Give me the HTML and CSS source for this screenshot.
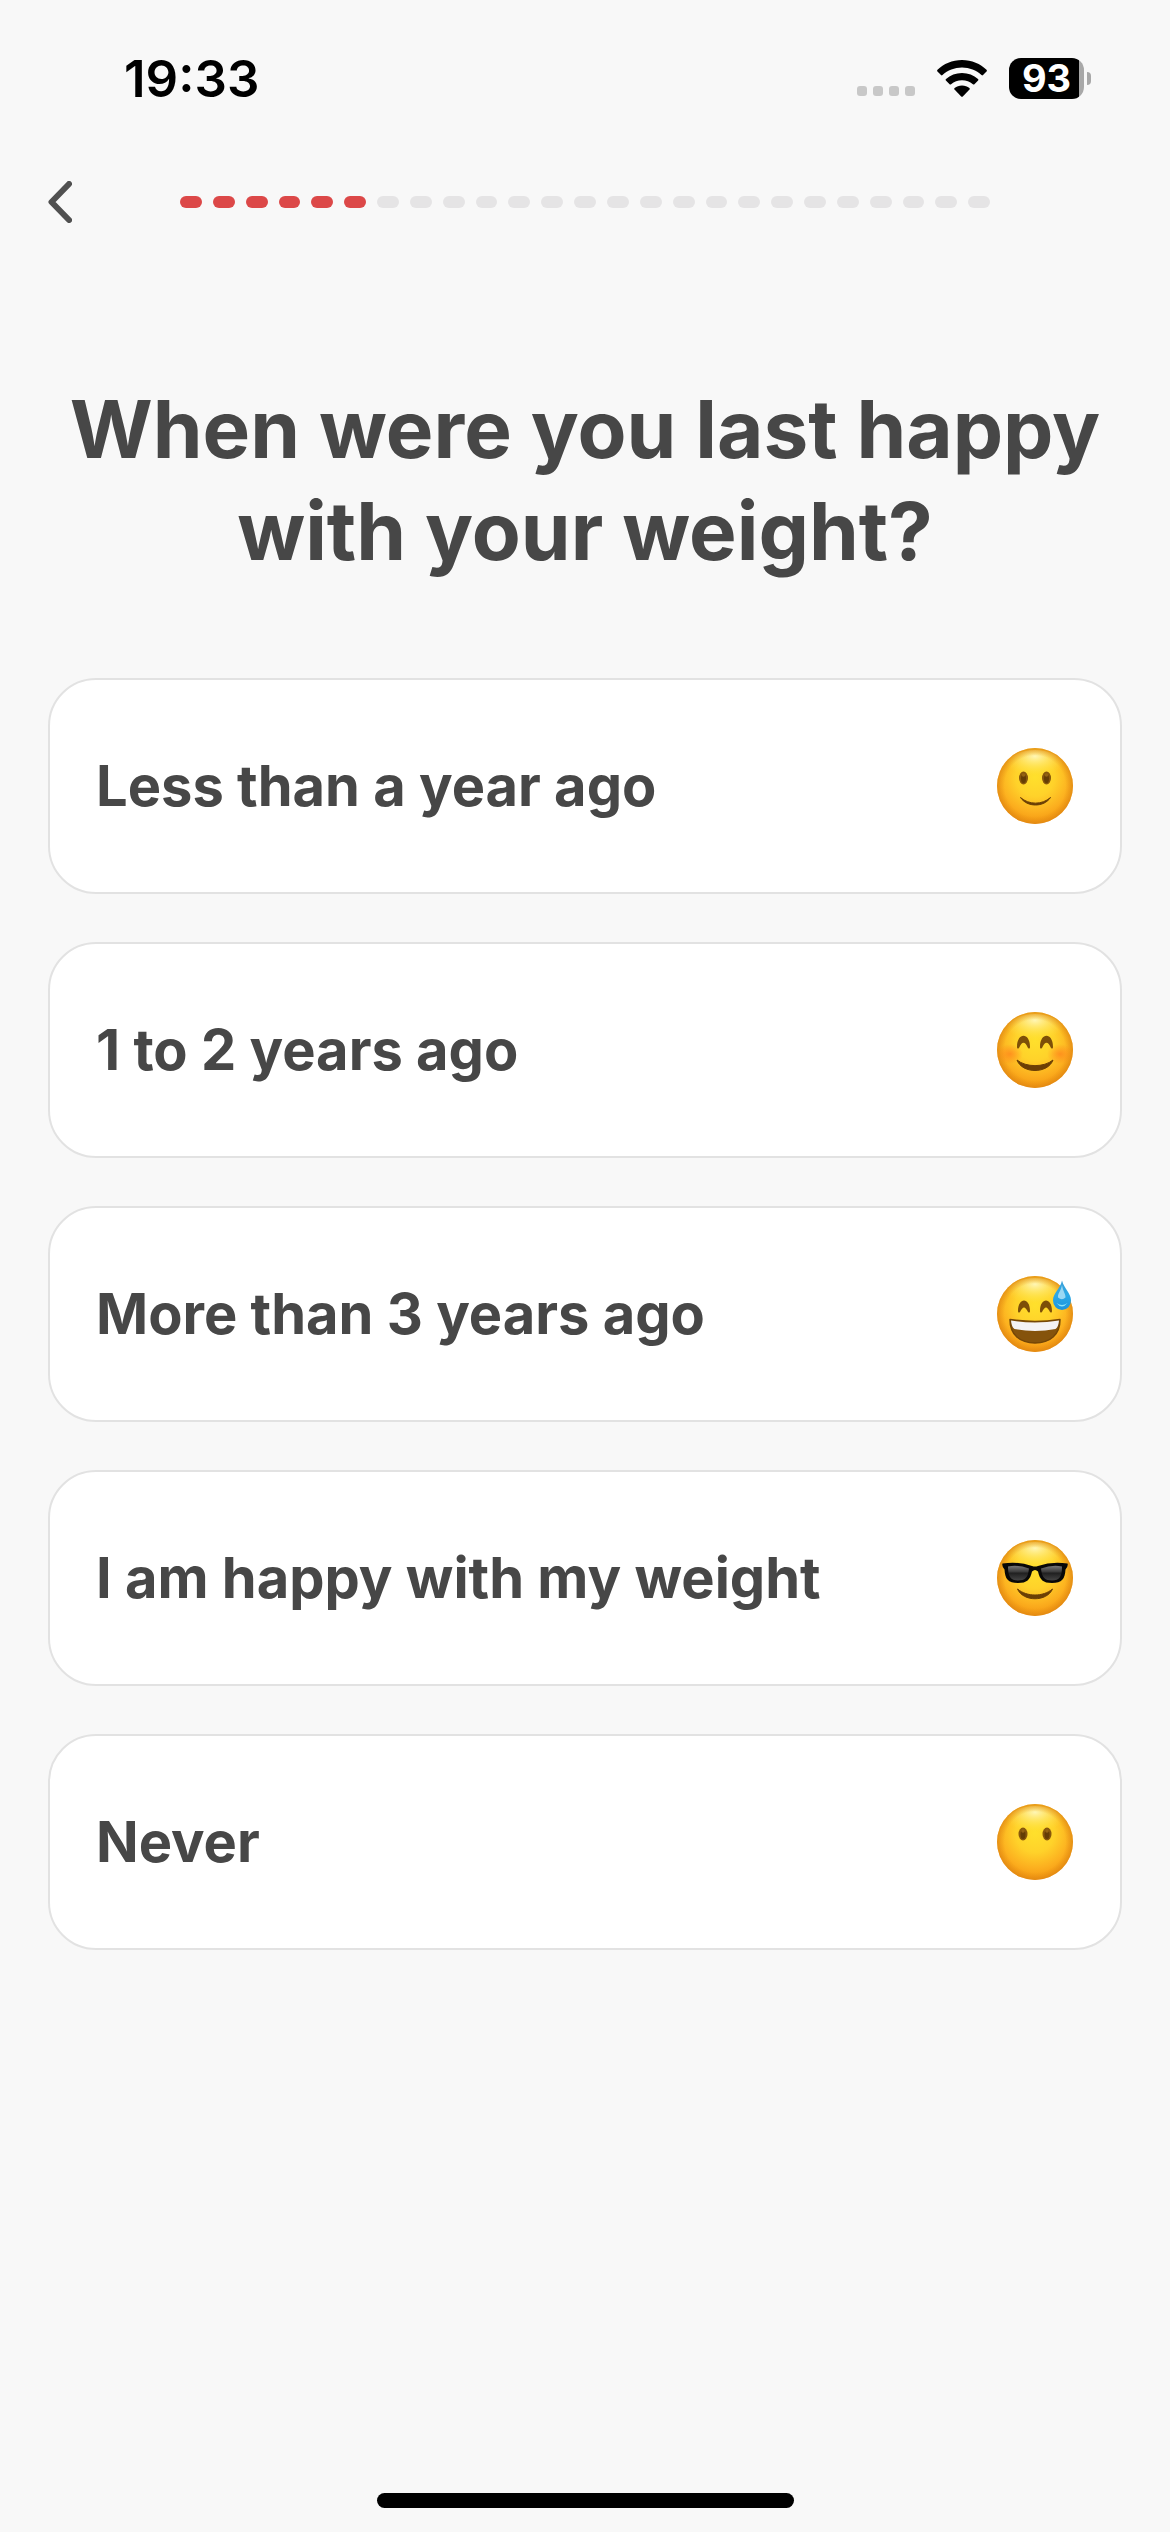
FILE: index.html
```html
<!DOCTYPE html>
<html lang="en">
<head>
  <meta charset="UTF-8" />
  <meta name="viewport" content="width=device-width, initial-scale=1.0"/>
  <title>When were you last happy with your weight?</title>
  <link rel="stylesheet" href="styles.css">
</head>
<body>
  <!-- shared face and gradients for the emoji -->
  <svg class="defs" width="0" height="0" aria-hidden="true">
    <defs>
      <radialGradient id="skin" cx="50%" cy="38%" r="64%">
        <stop offset="0" stop-color="#ffe02c"/>
        <stop offset="0.4" stop-color="#ffd22a"/>
        <stop offset="0.72" stop-color="#fcb01f"/>
        <stop offset="1" stop-color="#f3920f"/>
      </radialGradient>
      <radialGradient id="rim" cx="50%" cy="50%" r="50%">
        <stop offset="0.8" stop-color="#e08a10" stop-opacity="0"/>
        <stop offset="1" stop-color="#d98212" stop-opacity="0.65"/>
      </radialGradient>
      <radialGradient id="shine" cx="50%" cy="20%" r="60%">
        <stop offset="0" stop-color="#fffac4" stop-opacity="0.9"/>
        <stop offset="1" stop-color="#ffe94a" stop-opacity="0"/>
      </radialGradient>
      <radialGradient id="blush">
        <stop offset="0" stop-color="#ff7a1a" stop-opacity="0.65"/>
        <stop offset="1" stop-color="#ff7a1a" stop-opacity="0"/>
      </radialGradient>
      <linearGradient id="drop" x1="0" y1="0" x2="0" y2="1">
        <stop offset="0" stop-color="#3a9fd8"/>
        <stop offset="0.5" stop-color="#2ba9e6"/>
        <stop offset="1" stop-color="#1c93dc"/>
      </linearGradient>
      <linearGradient id="lens" x1="0" y1="0" x2="0" y2="1">
        <stop offset="0" stop-color="#777"/>
        <stop offset="0.4" stop-color="#3c3c3c"/>
        <stop offset="0.5" stop-color="#202020"/>
        <stop offset="1" stop-color="#444"/>
      </linearGradient>
      <symbol id="face" viewBox="0 0 78 78">
        <circle cx="39" cy="39" r="38" fill="url(#skin)"/>
        <ellipse cx="39" cy="19" rx="28" ry="16" fill="url(#shine)"/>
        <circle cx="39" cy="39" r="38" fill="url(#rim)"/>
      </symbol>
      <symbol id="eye" viewBox="0 0 10 14">
        <ellipse cx="5" cy="7" rx="4.5" ry="6.5" fill="#87570c"/>
        <ellipse cx="5" cy="7.5" rx="2.5" ry="4.5" fill="#643d05"/>
        <ellipse cx="5" cy="4" rx="1.8" ry="1.8" fill="#946313"/>
      </symbol>
    </defs>
  </svg>

  <div class="screen">
    <header class="status-bar">
      <div class="time">19:33</div>
      <div class="status-icons">
        <div class="signal"><i></i><i></i><i></i><i></i></div>
        <svg class="wifi" viewBox="0 0 50 37" aria-hidden="true">
          <path d="M25 0C34.700 0 43.500 3.800 49.500 9.800Q50.300 10.700 49.500 11.500L46 15.100Q45.300 15.800 44.500 15.100C39.300 10.400 32.500 7.600 25 7.600S10.700 10.400 5.500 15.100Q4.700 15.800 4 15.100L.5 11.500Q-.3 10.700 .5 9.800C6.500 3.800 15.300 0 25 0Z"/>
          <path d="M25 13C31.200 13 36.700 15.200 41 18.900Q41.900 19.700 41.100 20.500L37.400 24.200Q36.700 24.900 35.900 24.200C32.900 21.700 29.200 20.300 25 20.300S17.100 21.700 14.100 24.200Q13.300 24.900 12.600 24.200L8.900 20.500Q8.100 19.700 9 18.900C13.300 15.200 18.800 13 25 13Z"/>
          <path d="M25 25.500C27.900 25.500 30.400 26.500 32.400 28.100Q33.200 28.800 32.500 29.600L25.800 36.400Q25 37.200 24.200 36.400L17.500 29.600Q16.800 28.800 17.600 28.100C19.600 26.500 22.100 25.500 25 25.500Z"/>
        </svg>
        <div class="battery">
          <span class="level">93</span>
        </div>
      </div>
    </header>

    <nav class="top-nav">
      <button class="back" aria-label="Back">
        <svg viewBox="0 0 24 42" aria-hidden="true">
          <path d="M21 3L3.500 21L21 39"/>
        </svg>
      </button>
      <div class="progress" id="progress"></div>
    </nav>

    <main>
      <h1>When were you last happy with your weight?</h1>

      <div class="options">
        <button class="option">
          <span>Less than a year ago</span>
          <svg class="emoji" viewBox="0 0 78 78" aria-hidden="true">
            <use href="#face" width="78" height="78"/>
            <use href="#eye" x="22.500" y="24" width="10" height="14"/>
            <use href="#eye" x="45.500" y="24" width="10" height="14"/>
            <path d="M24.500 50.500C33 58 46 58 54.500 50.500C48 60.500 31 60.500 24.500 50.500Z" fill="#6b3f05" stroke="#6b3f05" stroke-linejoin="round"/>
          </svg>
        </button>

        <button class="option">
          <span>1 to 2 years ago</span>
          <svg class="emoji" viewBox="0 0 78 78" aria-hidden="true">
            <use href="#face" width="78" height="78"/>
            <ellipse cx="14" cy="43" rx="13" ry="10" fill="url(#blush)"/>
            <ellipse cx="64" cy="43" rx="13" ry="10" fill="url(#blush)"/>
            <path d="M21 36C21 21 34 21 34 36Q34 38.500 32 37C29 30 26 30 23 37Q21 38.500 21 36Z" fill="#7d4f08"/>
            <path d="M44 36C44 21 57 21 57 36Q57 38.500 55 37C52 30 49 30 46 37Q44 38.500 44 36Z" fill="#7d4f08"/>
            <path d="M21 49C30 56.500 48 56.500 57 49C52 63 26 63 21 49Z" fill="#6b3f05" stroke="#6b3f05" stroke-linejoin="round"/>
          </svg>
        </button>

        <button class="option">
          <span>More than 3 years ago</span>
          <svg class="emoji" viewBox="0 0 78 78" aria-hidden="true">
            <use href="#face" width="78" height="78"/>
            <path d="M22 36C22 22 34 22 34 36Q34 38.500 32 37C29 31 27 31 24 37Q22 38.500 22 36Z" fill="#7d4f08"/>
            <path d="M44 36C44 22 56 22 56 36Q56 38.500 54 37C51 31 49 31 46 37Q44 38.500 44 36Z" fill="#7d4f08"/>
            <path d="M14 44.500Q39 48.500 64 44.500C64 60 54 68 39 68S14 60 14 44.500Z" fill="#85530c" stroke="#744607" stroke-width="1.500" stroke-linejoin="round"/>
            <path d="M15 45.500Q39 49.500 63 45.500Q62.500 52 59.500 54Q39 58 18.500 54Q15.500 52 15 45.500Z" fill="#f4f2f4"/>
            <path d="M66 5.500C68.500 14.500 75 18 75 25.500A9 9.500 0 0 1 57 25.500C57 18 64 14.500 66 5.500Z" fill="url(#drop)"/>
            <path d="M66 10C67 17 69.500 18 69.500 22.500Q66 26 62 22.500C61.500 18.500 65 16 66 10Z" fill="#c9edfa" opacity="0.7"/>
            <path d="M60.500 28Q66 35 71.500 28Q66 32 60.500 28Z" fill="#8ae4fb"/>
          </svg>
        </button>

        <button class="option">
          <span>I am happy with my weight</span>
          <svg class="emoji" viewBox="0 0 78 78" aria-hidden="true">
            <use href="#face" width="78" height="78"/>
            <path d="M6.500 24.500Q22 22 36 27Q39 28 42 27Q56 22 71.500 24.500Q72.500 26.500 69.500 30.500C69 40 66 44 56 44C47 44 44 41 42 32.500Q39 29.500 36 32.500C34 41 31 44 22 44C12 44 9 40 8.500 30.500Q5.500 26.500 6.500 24.500Z" fill="#080808"/>
            <path d="M12 27.500Q22 25.500 33 29.500C32 39 29 41.500 22 41.500C14.500 41.500 12 37.500 12 27.500Z" fill="url(#lens)"/>
            <path d="M66 27.500Q56 25.500 45 29.500C46 39 49 41.500 56 41.500C63.500 41.500 66 37.500 66 27.500Z" fill="url(#lens)"/>
            <path d="M21.500 50C31 58 47 58 56.500 50C51 63 27 63 21.500 50Z" fill="#6b3f05" stroke="#6b3f05" stroke-linejoin="round"/>
          </svg>
        </button>

        <button class="option">
          <span>Never</span>
          <svg class="emoji" viewBox="0 0 78 78" aria-hidden="true">
            <use href="#face" width="78" height="78"/>
            <use href="#eye" x="22" y="24" width="10" height="14"/>
            <use href="#eye" x="46" y="24" width="10" height="14"/>
          </svg>
        </button>
      </div>
    </main>

    <div class="home-indicator"></div>
  </div>

  <script>
    const totalSteps = 25;
    const currentStep = 6;

    const progress = document.getElementById("progress");

    for (let i = 0; i < totalSteps; i++) {
      const step = document.createElement("span");
      step.className = i < currentStep ? "step done" : "step";
      progress.appendChild(step);
    }
  </script>
</body>
</html>
```
FILE: styles.css
```css
:root {
  --bg: #f8f8f8;
  --card: #ffffff;
  --border: #e2e2e2;
  --text: #474747;
  --accent: #dc4848;
  --step: #e5e4e5;
}

* {
  margin: 0;
  padding: 0;
  box-sizing: border-box;
}

body {
  background: var(--bg);
  font-family: Inter, sans-serif;
  color: var(--text);
}

button {
  border: none;
  background: none;
  font-family: inherit;
  color: inherit;
  cursor: pointer;
}

.defs {
  position: absolute;
}

.screen {
  display: flex;
  flex-direction: column;
  min-height: 100vh;
  padding: 0 48px 24px;
}

/* status bar */
.status-bar {
  display: flex;
  justify-content: space-between;
  align-items: center;
  height: 156px;
  padding: 0 38px 0 76px;
}

.time {
  font-size: 51px;
  font-weight: 600;
  color: #000;
}

.status-icons {
  display: flex;
  align-items: center;
  gap: 22px;
}

.signal {
  display: flex;
  gap: 6px;
  padding-top: 26px;
}

.signal i {
  width: 10px;
  height: 10px;
  border-radius: 3px;
  background: #c8c8c8;
}

.wifi {
  width: 50px;
  height: 37px;
}

.battery {
  position: relative;
  width: 75px;
  height: 41px;
  border-radius: 12px;
  background: linear-gradient(to right, #000 93%, #a8a8a8 93%);
}

.battery::after {
  content: "";
  position: absolute;
  right: -7px;
  top: 14px;
  width: 4px;
  height: 13px;
  border-radius: 0 4px 4px 0;
  background: #a8a8a8;
}

.level {
  display: block;
  font-size: 38px;
  font-weight: 700;
  line-height: 41px;
  text-align: center;
  color: #fff;
}

/* back arrow and progress */
.top-nav {
  display: flex;
  align-items: center;
  height: 92px;
}

.back {
  display: flex;
  width: 132px;
}

.back svg {
  width: 24px;
  height: 42px;
  fill: none;
  stroke: #505050;
  stroke-width: 6;
  stroke-linecap: round;
  stroke-linejoin: round;
}

.progress {
  display: flex;
  flex: 1;
  gap: 11px;
  margin-right: 132px;
}

.step {
  flex: 1;
  height: 12px;
  border-radius: 6px;
  background: var(--step);
}

.done {
  background: var(--accent);
}

h1 {
  margin-top: 130px;
  font-size: 80px;
  font-weight: 700;
  line-height: 102px;
  text-align: center;
}

.options {
  display: flex;
  flex-direction: column;
  gap: 48px;
  margin-top: 96px;
}

.option {
  display: flex;
  justify-content: space-between;
  align-items: center;
  min-height: 216px;
  padding: 0 46px;
  border: 2px solid var(--border);
  border-radius: 48px;
  background: var(--card);
  font-size: 56px;
  font-weight: 700;
  text-align: left;
}

.emoji {
  width: 78px;
  height: 78px;
}

.home-indicator {
  width: 417px;
  height: 15px;
  margin: auto auto 0;
  border-radius: 8px;
  background: #000;
}
```
